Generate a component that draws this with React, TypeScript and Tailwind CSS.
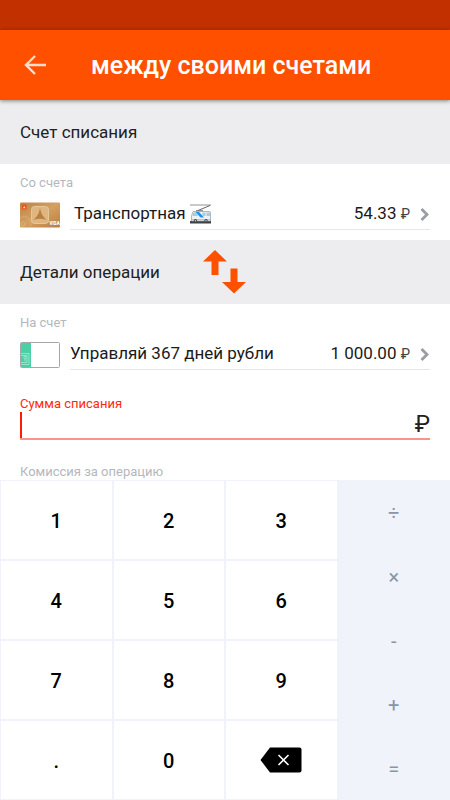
import { useState } from 'react';
import type { ReactNode } from 'react';

const DIGITS = ['1', '2', '3', '4', '5', '6', '7', '8', '9', '.', '0'];
const OPERATORS = ['÷', '×', '-', '+', '='];

function GoldCard() {
  return (
    <svg viewBox="0 0 40 26" className="h-[26px] w-10 shrink-0" aria-hidden="true">
      <defs>
        <linearGradient id="gold" x1="0" y1="0" x2="1" y2="1">
          <stop offset="0" stopColor="#bd8448" />
          <stop offset="0.5" stopColor="#d3a061" />
          <stop offset="1" stopColor="#b87f43" />
        </linearGradient>
      </defs>
      <rect y="0.5" width="40" height="25" rx="1" fill="url(#gold)" />
      <rect x="2" y="2.500" width="4.500" height="5" rx="0.5" fill="#ef4f14" />
      <path d="M4.200 3.700 5.400 6.300H3z" fill="#ffd9bd" />
      <rect x="11.500" y="4.500" width="17" height="17" rx="3" fill="#dfb680" stroke="#e6c79b" />
      <path d="M20 6c.6 4.500 2.600 8.500 6.500 12-4.200-1.800-8.800-1.800-13 0 3.900-3.500 5.900-7.500 6.500-12z" fill="#b8803f" />
      <g fill="none" stroke="#dcb685" strokeWidth="0.7">
        <circle cx="3" cy="22" r="2" />
        <path d="M0 17a6 6 0 0 1 9 8M0 15a8 8 0 0 1 11 10" strokeDasharray="1 0.7" />
        <path d="M34 1a7 7 0 0 0 6 6" strokeDasharray="1 1" opacity="0.5" />
      </g>
      <text x="29.500" y="23" fontSize="4.500" fontWeight="900" fill="#fff" fontFamily="Roboto, sans-serif">
        VISA
      </text>
    </svg>
  );
}

function GreenCard() {
  return (
    <svg viewBox="0 0 40 26" className="h-[26px] w-10 shrink-0" aria-hidden="true">
      <rect x="0.5" y="0.5" width="39" height="25" rx="1" fill="#fff" stroke="#a3a8a6" />
      <path d="M1 1h10v24H1z" fill="#4bd0a5" />
      <g fill="none" stroke="#a5ead3" strokeWidth="0.8">
        <path d="M1 11.500h8v11H1M1 13.500h6v7H1" />
        <circle cx="5" cy="15.500" r="1.200" />
        <path d="M5 17v2" />
      </g>
    </svg>
  );
}

function Trolleybus() {
  return (
    <svg viewBox="0 0 22 20" className="h-5 w-[22px]" role="img" aria-label="троллейбус">
      <path d="M0 1h21" stroke="#777" strokeWidth="0.8" />
      <path d="M20 1.500 8 6.500" stroke="#555" strokeWidth="0.9" />
      <path d="M6 6.700h7" stroke="#777" strokeWidth="1" />
      <path d="M0 17h21v2.500H0z" fill="#3d4346" />
      <path d="M3 7.500h16.500q1 0 1 1V17h-19v-5z" fill="#eef2f4" stroke="#929a9e" strokeWidth="0.7" />
      <path d="M3.500 8.500H6l2 3.500H2.300zM12.500 8.500h3V12h-3zM16.500 8.500H20V12h-3.500z" fill="#a9cbdc" />
      <path d="M5.500 8H9l5 5.500h-3.500z" fill="#1c92e8" />
      <path d="M2 15.500h18.500" stroke="#aab2b6" strokeWidth="0.7" />
      <circle cx="5.500" cy="16.800" r="1.700" fill="#444" />
      <circle cx="16" cy="16.800" r="1.700" fill="#444" />
      <circle cx="5.500" cy="16.800" r="0.700" fill="#ddd" />
      <circle cx="16" cy="16.800" r="0.700" fill="#ddd" />
    </svg>
  );
}

function SectionTitle({ children }: { children: ReactNode }) {
  return (
    <div className="relative flex h-16 items-center bg-[#ededef] px-5 pt-0.5">
      <h2 className="text-[17px] text-[#212121]">{children}</h2>
    </div>
  );
}

type AccountRowProps = {
  label: string;
  card: ReactNode;
  name: ReactNode;
  amount: string;
};

function AccountRow({ label, card, name, amount }: AccountRowProps) {
  return (
    <div className="px-5 pt-[11px] pb-2.5">
      <p className="text-[13px] leading-4 text-[#b4b7bd]">{label}</p>
      <button type="button" className="mt-2 flex w-full items-center gap-2.5 text-left">
        {card}
        <span className="flex h-[31px] flex-1 items-center border-b border-[#e6e6e8] text-[17px] text-[#1a1a1a]">
          <span className="flex flex-1 items-center gap-1">{name}</span>
          <span>
            {amount} <span className="text-sm text-[#444]">₽</span>
          </span>
          <svg viewBox="0 0 10 14" className="ml-2.5 h-3.5 w-2.5" aria-hidden="true">
            <path d="m1.500 2 5.500 5.500L1.500 13" fill="none" stroke="#9a9da2" strokeWidth="2.800" />
          </svg>
        </span>
      </button>
    </div>
  );
}

export default function App() {
  const [amount, setAmount] = useState('');

  return (
    <div className="flex min-h-screen flex-col bg-white font-[Roboto,sans-serif]">
      <div className="h-[30px] bg-[#c23000]" />
      <header className="relative z-10 flex h-[70px] items-center bg-[#ff5000] px-6 shadow-[0_1px_4px_rgba(0,0,0,0.45)]">
        <button type="button" aria-label="Назад" className="mr-11">
          <svg viewBox="0 0 23 20" className="h-5 w-[23px]" aria-hidden="true">
            <path d="M22 10H2.500M11 1 2 10l9 9" fill="none" stroke="#ffdccc" strokeWidth="2.400" />
          </svg>
        </button>
        <h1 className="pt-0.5 text-[25px] leading-8 font-medium text-white">между своими счетами</h1>
      </header>

      <main className="flex-1">
        <SectionTitle>Счет списания</SectionTitle>
        <AccountRow
          label="Со счета"
          card={<GoldCard />}
          name={
            <>
              <span className="pl-1">Транспортная</span>
              <Trolleybus />
            </>
          }
          amount="54.33"
        />

        <SectionTitle>
          Детали операции
          <button
            type="button"
            aria-label="Поменять счета местами"
            className="absolute inset-y-0 left-1/2 flex -translate-x-1/2 items-center"
          >
            <svg viewBox="0 0 44 44" className="h-11 w-11" aria-hidden="true">
              <path d="M12 0 24 11.500h-8.500V25h-7V11.500H0z" fill="#ff5000" />
              <path d="M27.500 18.500h7V32H43L31 43.500 19 32h8.500z" fill="#ff5000" />
            </svg>
          </button>
        </SectionTitle>
        <AccountRow label="На счет" card={<GreenCard />} name="Управляй 367 дней рубли" amount="1 000.00" />

        <div className="px-5 pt-4">
          <label htmlFor="amount" className="block text-[13px] leading-4 text-[#ff2a0a]">
            Сумма списания
          </label>
          <div className="flex h-7 items-center border-b-2 border-[#fb9488]">
            <input
              id="amount"
              inputMode="none"
              value={amount}
              onChange={(e) => setAmount(e.target.value)}
              className="h-full min-w-0 flex-1 border-l-2 border-[#ff1a0a] pl-1 text-xl outline-none"
            />
            <span className="text-[23px] leading-6 text-[#212121]">₽</span>
          </div>
          <p className="mt-6 text-[13px] leading-4 text-[#b4b7bd]">Комиссия за операцию</p>
        </div>
      </main>

      <div className="grid grid-cols-4 bg-[#f0f4fa]">
        <div className="col-span-3 grid grid-cols-3">
          {DIGITS.map((d) => (
            <button
              key={d}
              type="button"
              onClick={() => setAmount((v) => v + d)}
              className="h-20 border border-[#f0f4fa] bg-white pt-0.5 text-xl font-medium text-black"
            >
              {d}
            </button>
          ))}
          <button
            type="button"
            aria-label="Стереть"
            onClick={() => setAmount((v) => v.slice(0, -1))}
            className="flex h-20 items-center justify-center border border-[#f0f4fa] bg-white"
          >
            <svg viewBox="0 0 42 26" className="h-[26px] w-[42px]" aria-hidden="true">
              <path d="M10 .5h29.500a2 2 0 0 1 2 2v21a2 2 0 0 1-2 2H10L.5 13z" fill="#000" />
              <path d="m18.500 8 10 10m0-10-10 10" stroke="#fff" strokeWidth="1.600" />
            </svg>
          </button>
        </div>
        <div className="flex flex-col">
          {OPERATORS.map((op) => (
            <button key={op} type="button" className="flex-1 pt-0.5 text-xl text-[#8b95a8]">
              {op}
            </button>
          ))}
        </div>
      </div>
    </div>
  );
}
